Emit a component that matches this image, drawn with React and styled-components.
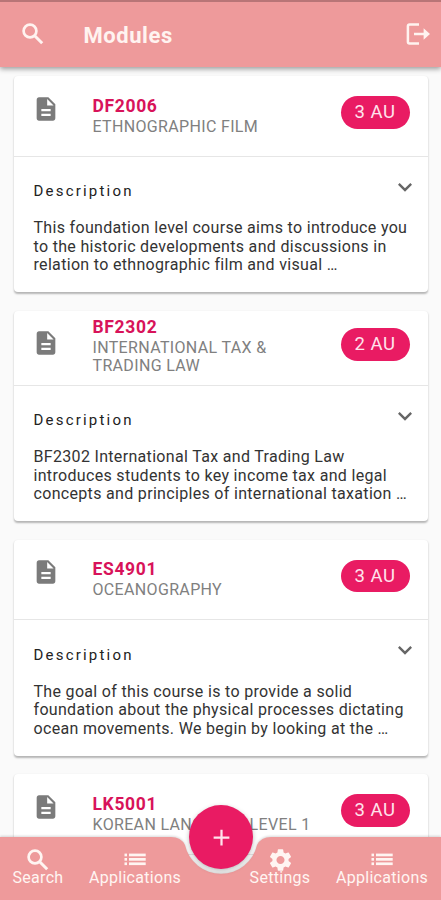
import React from 'react';
import styled, { createGlobalStyle } from 'styled-components';
import { MdDescription, MdSettings, MdExpandMore, MdAdd } from 'react-icons/md';

const colour = {
  primary: '#ee9a9b',
  accent: '#e91b63',
  code: '#d8135a',
  muted: '#808080',
  page: '#fafafa',
};

const GlobalStyle = createGlobalStyle`
  * {
    box-sizing: border-box;
  }
  body {
    margin: 0;
    font-family: Roboto, "Liberation Sans", sans-serif;
    background: ${colour.page};
  }
`

const Screen = styled.div`
  position: relative;
  display: flex;
  flex-direction: column;
  width: 100%;
  height: 900px;
  overflow: hidden;
  background: ${colour.page};
`

const AppBar = styled.header`
  flex: none;
  display: flex;
  align-items: center;
  height: 67px;
  padding: 0 10px 2px 19px;
  border-top: 2px solid #b87577;
  background: ${colour.primary};
  color: #fff3f0;
  box-shadow: 0 2px 5px rgba(0, 0, 0, 0.38);
  z-index: 1;
`

const AppTitle = styled.h1`
  flex: 1;
  margin: 4px 0 0 36.5px;
  font-size: 22px;
  font-weight: 700;
  letter-spacing: 0.55px;
  line-height: 28px;
`

const ModuleList = styled.main`
  flex: 1;
  display: flex;
  flex-direction: column;
  gap: 18.5px;
  min-height: 0;
  padding: 9px 13px 0 14px;
`

const Card = styled.article`
  flex: none;
  border-radius: 4px;
  background: #fff;
  box-shadow: 0 1.5px 2px rgba(0, 0, 0, 0.28);
`

const CardHeader = styled.div`
  display: flex;
  align-items: flex-start;
  height: ${props => (props.$tall ? 75 : 80.5)}px;
  padding: ${props => (props.$tall ? 6 : 19.5)}px 18.5px 0 18px;
  border-bottom: 1px solid #e6e6e6;
`

const FileIcon = styled(MdDescription)`
  flex: none;
  margin-top: ${props => (props.$tall ? 12 : -1)}px;
  color: #7b7b7b;
`

const Heading = styled.div`
  flex: 1;
  margin-left: 32.5px;
`

const ModuleCode = styled.h2`
  margin: 0;
  color: ${colour.code};
  font-size: 17.5px;
  font-weight: 700;
  letter-spacing: 0.65px;
  line-height: 20px;
`

const ModuleName = styled.p`
  margin: 2px 0 0;
  color: ${colour.muted};
  font-size: 16px;
  letter-spacing: 0.34px;
  line-height: 18.5px;
  white-space: pre;
`

const Credits = styled.span`
  flex: none;
  width: 69px;
  height: 32.5px;
  margin-top: ${props => (props.$tall ? 11.5 : 0.5)}px;
  border-radius: 17px;
  background: ${colour.accent};
  color: #ffe3ec;
  font-size: 18.5px;
  letter-spacing: 0.5px;
  line-height: 33px;
  text-align: center;
`

const CardBody = styled.div`
  height: 135.5px;
  padding: 17.5px 9px 0 19.5px;
`

const DescriptionRow = styled.div`
  display: flex;
  align-items: center;
  justify-content: space-between;
  height: 34px;
`

const DescriptionTitle = styled.h3`
  margin: 0;
  color: #222;
  font-size: 15px;
  font-weight: 400;
  letter-spacing: 2.2px;
`

const Chevron = styled(MdExpandMore)`
  margin-bottom: 9px;
  color: #666;
`

const DescriptionText = styled.p`
  margin: 11px 0 0;
  color: #333;
  font-size: 16px;
  letter-spacing: 0.32px;
  line-height: 18.5px;
  white-space: pre;
`

// sits over the bottom of the list, the notch lets the cards show through
const BottomBar = styled.nav`
  position: absolute;
  left: 0;
  right: 0;
  bottom: 0;
  height: 63px;
  z-index: 2;
`

const BarShape = styled.svg`
  position: absolute;
  inset: 0;
  overflow: visible;
  filter: drop-shadow(0 -1px 1px rgba(0, 0, 0, 0.15));
`

const TabRow = styled.div`
  position: relative;
  display: flex;
  justify-content: space-between;
  height: 100%;
  padding: 9px 13px 0 13px;
`

const TabGroup = styled.div`
  display: flex;
  gap: 26px;
`

const Tab = styled.div`
  display: flex;
  flex-direction: column;
  align-items: center;
  width: ${props => props.$width}px;
  color: #fff5f2;
  font-size: 16px;
  letter-spacing: 0.3px;
  line-height: 18px;
  white-space: nowrap;

  svg {
    flex: none;
    height: 28px;
    margin-bottom: -5px;
  }
`

const AddButton = styled.button`
  position: absolute;
  top: -32px;
  left: 189px;
  display: flex;
  align-items: center;
  justify-content: center;
  width: 64px;
  height: 64px;
  padding: 0;
  border: 0;
  border-radius: 50%;
  background: ${colour.accent};
  color: #ffe3ec;
  box-shadow: 0 2px 5px rgba(0, 0, 0, 0.28);
`

const SearchIcon = () => (
  <svg width="28" height="28" viewBox="0 0 28 28" fill="none" stroke="currentColor" strokeWidth="2.7">
    <circle cx="11" cy="11" r="6.4" />
    <path d="M15.7 15.7L23.2 23.2" strokeWidth="3" />
  </svg>
)

const LogoutIcon = () => (
  <svg width="26" height="24" viewBox="0 0 26 24" fill="none" stroke="currentColor" strokeWidth="2.5">
    <path d="M14 2.6H4.6Q2.9 2.6 2.9 4.3V19.7Q2.9 21.4 4.6 21.4H14" />
    <path d="M9 12H21.5" />
    <path d="M18.6 6.2L25 12L18.6 17.8Z" fill="currentColor" stroke="none" />
  </svg>
)

const ListIcon = () => (
  <svg width="28" height="28" viewBox="0 0 28 28" fill="currentColor">
    {[7.6, 12, 16.4].map(y => (
      <g key={y}>
        <rect x="3.5" y={y} width="2.5" height="2.7" />
        <rect x="8" y={y} width="16.7" height="2.7" />
      </g>
    ))}
  </svg>
)

const modules = [
  {
    code: 'DF2006',
    name: 'ETHNOGRAPHIC FILM',
    au: 3,
    text: 'This foundation level course aims to introduce you\nto the historic developments and discussions in\nrelation to ethnographic film and visual …',
  },
  {
    code: 'BF2302',
    name: 'INTERNATIONAL TAX &\nTRADING LAW',
    au: 2,
    tall: true,
    text: 'BF2302 International Tax and Trading Law\nintroduces students to key income tax and legal\nconcepts and principles of international taxation …',
  },
  {
    code: 'ES4901',
    name: 'OCEANOGRAPHY',
    au: 3,
    text: 'The goal of this course is to provide a solid\nfoundation about the physical processes dictating\nocean movements. We begin by looking at the …',
  },
  {
    code: 'LK5001',
    name: 'KOREAN LANGUAGE LEVEL 1',
    au: 3,
    text: '',
  },
];

const ModuleCard = ({ code, name, au, text, tall }) => (
  <Card>
    <CardHeader $tall={tall}>
      <FileIcon size={28} $tall={tall} />
      <Heading>
        <ModuleCode>{code}</ModuleCode>
        <ModuleName>{name}</ModuleName>
      </Heading>
      <Credits $tall={tall}>{au} AU</Credits>
    </CardHeader>
    <CardBody>
      {text && (
        <>
          <DescriptionRow>
            <DescriptionTitle>Description</DescriptionTitle>
            <Chevron size={28} />
          </DescriptionRow>
          <DescriptionText>{text}</DescriptionText>
        </>
      )}
    </CardBody>
  </Card>
)

const App = () => {
  return (
    <>
      <GlobalStyle />
      <Screen>
        <AppBar>
          <SearchIcon />
          <AppTitle>Modules</AppTitle>
          <LogoutIcon />
        </AppBar>
        <ModuleList>
          {modules.map(item => <ModuleCard key={item.code} {...item} />)}
        </ModuleList>
        <BottomBar>
          <BarShape width="441" height="63" viewBox="0 0 441 63">
            <path
              d="M0 0H171Q181 0 185 8A36.9 36.9 0 0 0 257 8Q261 0 271 0H441V63H0Z"
              fill={colour.primary}
            />
          </BarShape>
          <TabRow>
            <TabGroup>
              <Tab $width={50}><SearchIcon />Search</Tab>
              <Tab $width={92}><ListIcon />Applications</Tab>
            </TabGroup>
            <TabGroup>
              <Tab $width={60}><MdSettings size={27} />Settings</Tab>
              <Tab $width={92}><ListIcon />Applications</Tab>
            </TabGroup>
          </TabRow>
          <AddButton aria-label="Add"><MdAdd size={27} /></AddButton>
        </BottomBar>
      </Screen>
    </>
  )
}

export default App;
